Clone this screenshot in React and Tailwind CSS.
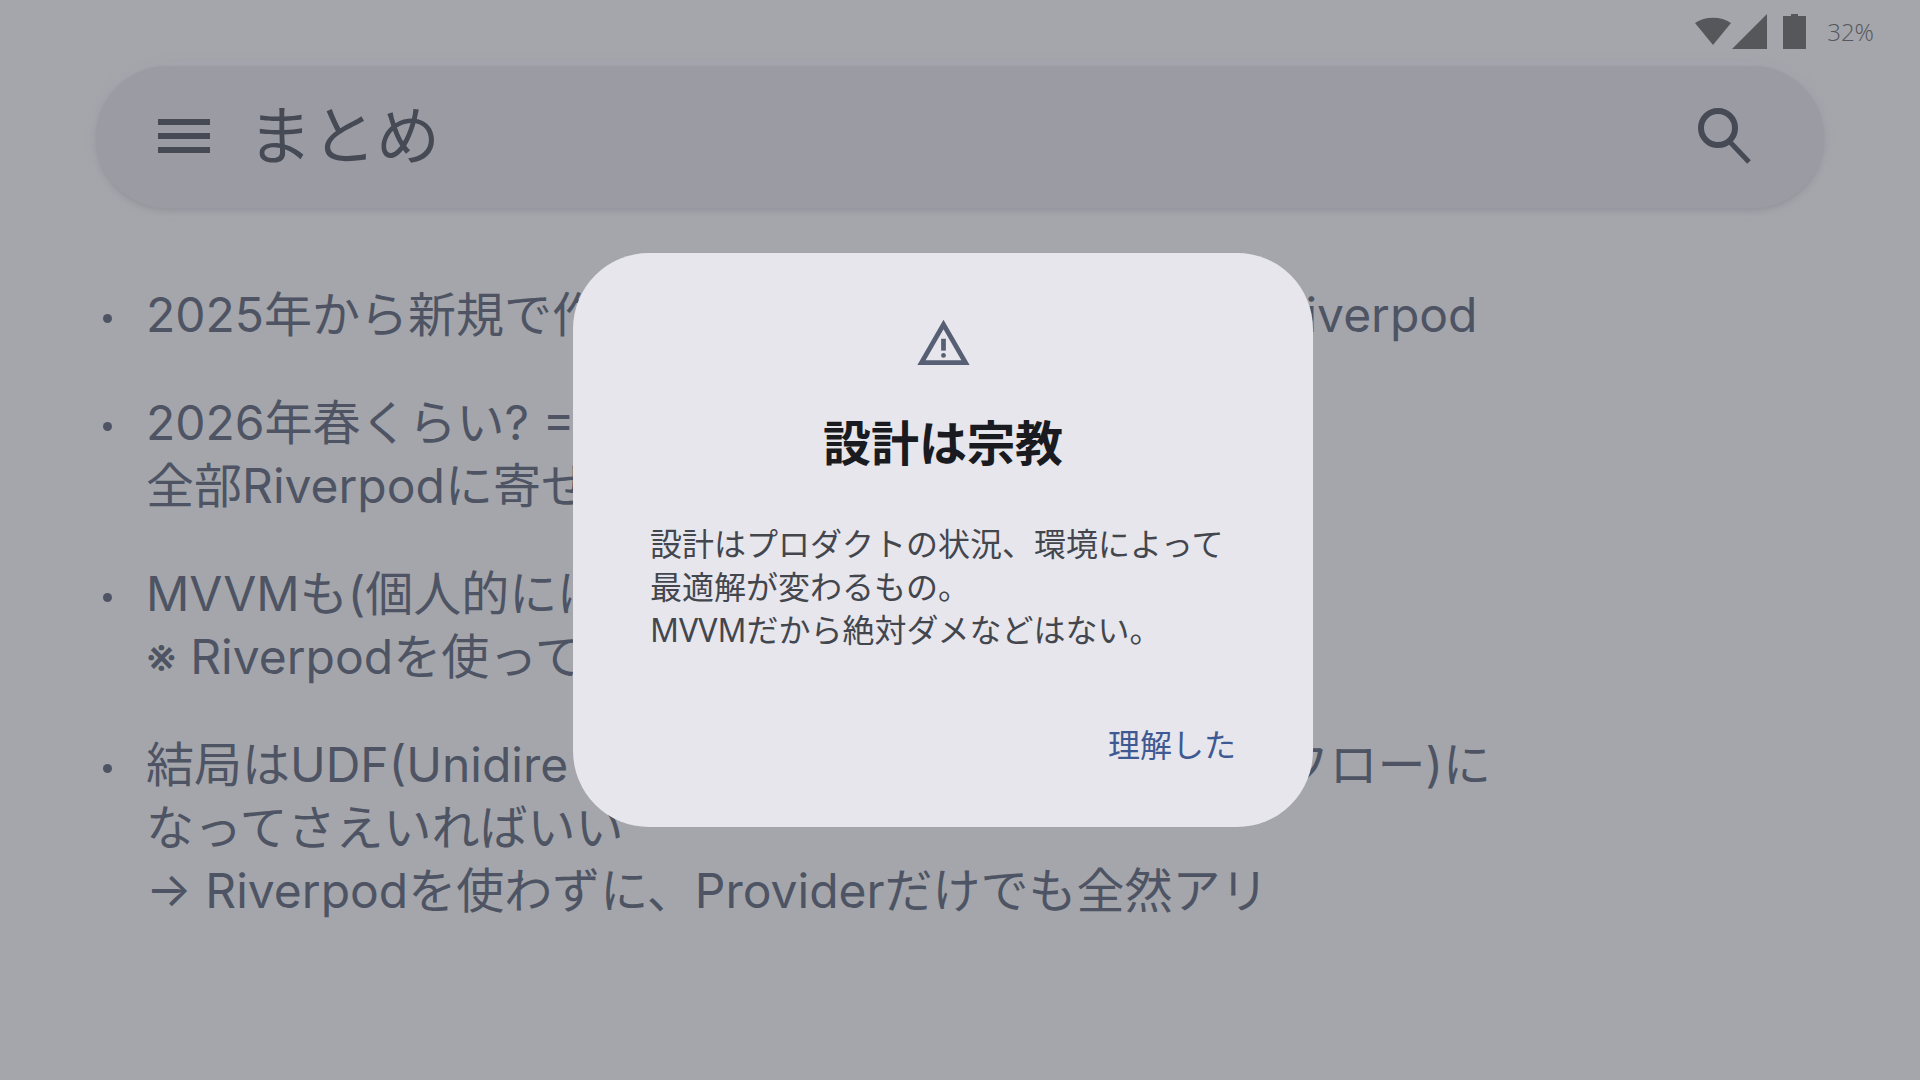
import React, { useState } from "react";

// a line is either plain text or a [start, end] pair spread over the row
const notes = [
  [["2025年から新規で作", "Riverpod\u00a0"]],
  ["2026年春くらい? =", "全部Riverpodに寄せ"],
  ["MVVMも(個人的には", "※ Riverpodを使って"],
  [
    ["結局はUDF(Unidire", "フロー)に"],
    "なってさえいればいい",
    "→ Riverpodを使わずに、Providerだけでも全然アリ",
  ],
];

const StatusBar = () => (
  <div className="flex h-[66px] items-center justify-end pr-[46px] pb-[2px] text-[#56575b]">
    <svg width="112" height="38" viewBox="0 0 112 38" fill="currentColor">
      <path d="M0 10C10 3 26 3 36 10L18 32Z" />
      <path d="M37 36H72V1Z" />
      <path d="M88 3h8V1h7v2h8v33H88Z" />
    </svg>
    <span className="ml-5 font-['Open_Sans'] text-2xl font-light">32%</span>
  </div>
);

const SearchBar = ({ onOpen }) => (
  <header className="mr-24 ml-24 flex h-[142px] items-center rounded-full bg-[#9b9ba4] pr-[72px] pb-[2px] pl-[62px] text-[#464a54] shadow-[0_3px_5px_rgba(115,116,120,0.3),0_0_14px_rgba(162,162,176,0.8)]">
    <button aria-label="Menu" className="cursor-pointer">
      <svg width="52" height="34" viewBox="0 0 52 34" fill="currentColor">
        <path d="M0 0h52v6H0zM0 14h52v6H0zM0 28h52v6H0z" />
      </svg>
    </button>
    <h1 className="ml-[38px] text-[64px] leading-[72px]">まとめ</h1>
    <button aria-label="Search" className="ml-auto cursor-pointer" onClick={onOpen}>
      <svg width="54" height="57" viewBox="0 0 54 57" fill="none" stroke="currentColor">
        <circle cx="20" cy="20" r="17" strokeWidth="6" />
        <path d="M31 33L51 54" strokeWidth="5" />
      </svg>
    </button>
  </header>
);

const NoteLine = ({ line }) =>
  Array.isArray(line) ? (
    <p className="flex justify-between">
      <span>{line[0]}</span>
      <span>{line[1]}</span>
    </p>
  ) : (
    <p>{line}</p>
  );

const NoteList = () => (
  <ul className="mt-[75px] w-[1491px] space-y-[45px] pl-[103px] text-5xl leading-[63px] text-[#4e5463]">
    {notes.map((lines, idx) => (
      <li key={idx} className="flex">
        <span className="mt-[31px] mr-[34px] size-[9px] shrink-0 rounded-full bg-[#4e5463]" />
        <div className="grow whitespace-nowrap">
          {lines.map((line, i) => (
            <NoteLine key={i} line={line} />
          ))}
        </div>
      </li>
    ))}
  </ul>
);

const WarningDialog = ({ onClose }) => (
  <div className="fixed inset-0 flex items-center justify-center pr-[34px]">
    <div
      role="dialog"
      aria-labelledby="dialog-title"
      className="flex w-[740px] flex-col items-center rounded-[76px] bg-[#e7e6ed] px-[77px] pt-[62px] pb-[50px] font-['Noto_Sans','Noto_Sans_CJK_JP',sans-serif]"
    >
      <svg width="57" height="57" viewBox="0 0 24 24" fill="#565f73">
        <path d="M12 5.990L19.530 19H4.470L12 5.990M12 2L1 21h22L12 2z" />
        <path d="M11 10h2v5h-2z" />
        <circle cx="12" cy="17" r="1" />
      </svg>
      <h2 id="dialog-title" className="mt-9 text-5xl leading-[70px] font-bold text-[#191b20]">
        設計は宗教
      </h2>
      <p className="mt-[44px] self-stretch text-[32px] leading-[43px] whitespace-nowrap text-[#44464e]">
        設計はプロダクトの状況、環境によって
        <br />
        最適解が変わるもの。
        <br />
        MVVMだから絶対ダメなどはない。
      </p>
      <button
        className="mt-[62px] cursor-pointer self-end p-0 text-[32px] leading-[64px] text-[#3f5a92]"
        onClick={onClose}
      >
        理解した
      </button>
    </div>
  </div>
);

const App = () => {
  const [open, setOpen] = useState(true);

  return (
    <div
      lang="ja"
      className="min-h-screen overflow-hidden bg-[#a4a6ab] font-['Inter','Noto_Sans_CJK_JP',sans-serif]"
    >
      <StatusBar />
      <SearchBar onOpen={() => setOpen(true)} />
      <NoteList />
      {open && <WarningDialog onClose={() => setOpen(false)} />}
    </div>
  );
};

export default App;
